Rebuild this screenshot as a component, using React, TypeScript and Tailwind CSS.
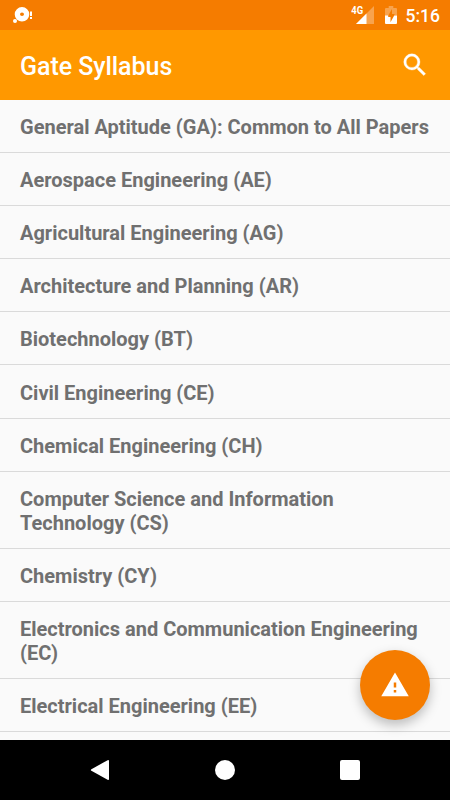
import {FC} from 'react';

const branches = [
  'General Aptitude (GA): Common to All Papers',
  'Aerospace Engineering (AE)',
  'Agricultural Engineering (AG)',
  'Architecture and Planning (AR)',
  'Biotechnology (BT)',
  'Civil Engineering (CE)',
  'Chemical Engineering (CH)',
  'Computer Science and Information Technology (CS)',
  'Chemistry (CY)',
  'Electronics and Communication Engineering (EC)',
  'Electrical Engineering (EE)',
];

const StatusBar: FC = () => (
  <div className="flex h-[30px] shrink-0 items-center bg-[#f57c00] pr-[10px] pl-3 text-white">
    <svg width="22" height="30" viewBox="0 0 22 30" fill="currentColor">
      <path
        fillRule="evenodd"
        d="M10 7a7.3 7.3 0 1 0 0 14.6A7.3 7.3 0 0 0 10 7Zm0 5.6a2 1.7 0 1 1 0 3.4 2 1.7 0 0 1 0-3.4Z"
      />
      <circle cx="3" cy="21" r="2" />
      <path d="M18 11.5h2v4.5h-2zM18 17h2v2h-2z" />
    </svg>
    <div className="ml-auto flex items-center">
      <span className="mr-[-9px] mb-[8px] origin-right scale-x-90 text-[10.5px] leading-none font-bold">
        4G
      </span>
      <svg width="19" height="30" viewBox="0 0 19 30" fill="currentColor">
        <path d="M19 6v18H1z" opacity="0.3" />
        <path d="M11.5 13.5V24H1z" />
      </svg>
      <svg className="ml-[11px]" width="12" height="30" viewBox="0 0 12 30" fill="currentColor">
        <path
          d="M3.7 6h4.6v2H11q1 0 1 1v6.5H9.5V14H7V9l-4 7H0V9q0-1 1-1h2.7z"
          opacity="0.3"
        />
        <path d="M0 15.5h3.2V17h2.3v5.2l3.7-6.7H12V23q0 1-1 1H1q-1 0-1-1z" />
      </svg>
      <span className="ml-[9px] pt-[2px] text-[17.5px] leading-[30px] font-medium">5:16</span>
    </div>
  </div>
);

const Toolbar: FC = () => (
  <header className="flex h-[70px] shrink-0 items-center justify-between bg-[#ff9800] px-5 text-white">
    <h1 className="pt-[3px] text-[25px] leading-[30px] font-medium tracking-[-0.05px]">Gate Syllabus</h1>
    <button type="button" aria-label="Search">
      <svg
        width="30"
        height="30"
        viewBox="0 0 24 24"
        fill="currentColor"
        stroke="currentColor"
        strokeWidth="0.25">
        <path d="M15.5 14h-.79l-.28-.27A6.471 6.471 0 0 0 16 9.5 6.5 6.5 0 1 0 9.5 16c1.61 0 3.09-.59 4.23-1.57l.27.28v.79l5 4.99L20.49 19l-4.99-5zm-6 0C7.01 14 5 11.99 5 9.5S7.01 5 9.5 5 14 7.01 14 9.5 11.99 14 9.5 14z" />
      </svg>
    </button>
  </header>
);

const BranchList: FC = () => (
  <ul className="min-h-0 flex-1 overflow-hidden bg-[#fafafa]">
    {branches.map((name) => (
      <li
        key={name}
        className="border-b border-[#dadada] pt-[15.1px] pr-4 pb-[13px] pl-5 text-[20px] leading-6 font-bold text-[#707070]">
        {name}
      </li>
    ))}
  </ul>
);

const NavigationBar: FC = () => (
  <nav className="flex h-[60px] shrink-0 items-center justify-between bg-black px-[90px] text-white">
    <svg width="20" height="20" viewBox="0 0 20 20" fill="currentColor">
      <path d="M1.4 9.2 17.6.2q1.4-.6 1.4.8v18q0 1.4-1.4.8L1.4 10.8q-1.2-.8 0-1.6z" />
    </svg>
    <div className="size-5 rounded-full bg-white" />
    <div className="size-5 rounded-[2px] bg-white" />
  </nav>
);

const App: FC = () => {
  return (
    <div className="relative flex h-[800px] w-[450px] flex-col overflow-hidden bg-[#fafafa] font-['Roboto',sans-serif]">
      <StatusBar />
      <Toolbar />
      <BranchList />
      <button
        type="button"
        aria-label="Report a problem"
        className="absolute right-5 bottom-20 flex size-[70px] items-center justify-center rounded-full bg-[#f57c00] text-white shadow-[0_5px_12px_rgba(0,0,0,0.25)]">
        <svg width="30" height="30" viewBox="0 0 24 24" fill="currentColor">
          <path d="M1 21h22L12 2 1 21zm12-3h-2v-2h2v2zm0-4h-2v-4h2v4z" />
        </svg>
      </button>
      <NavigationBar />
    </div>
  );
};

export default App;
